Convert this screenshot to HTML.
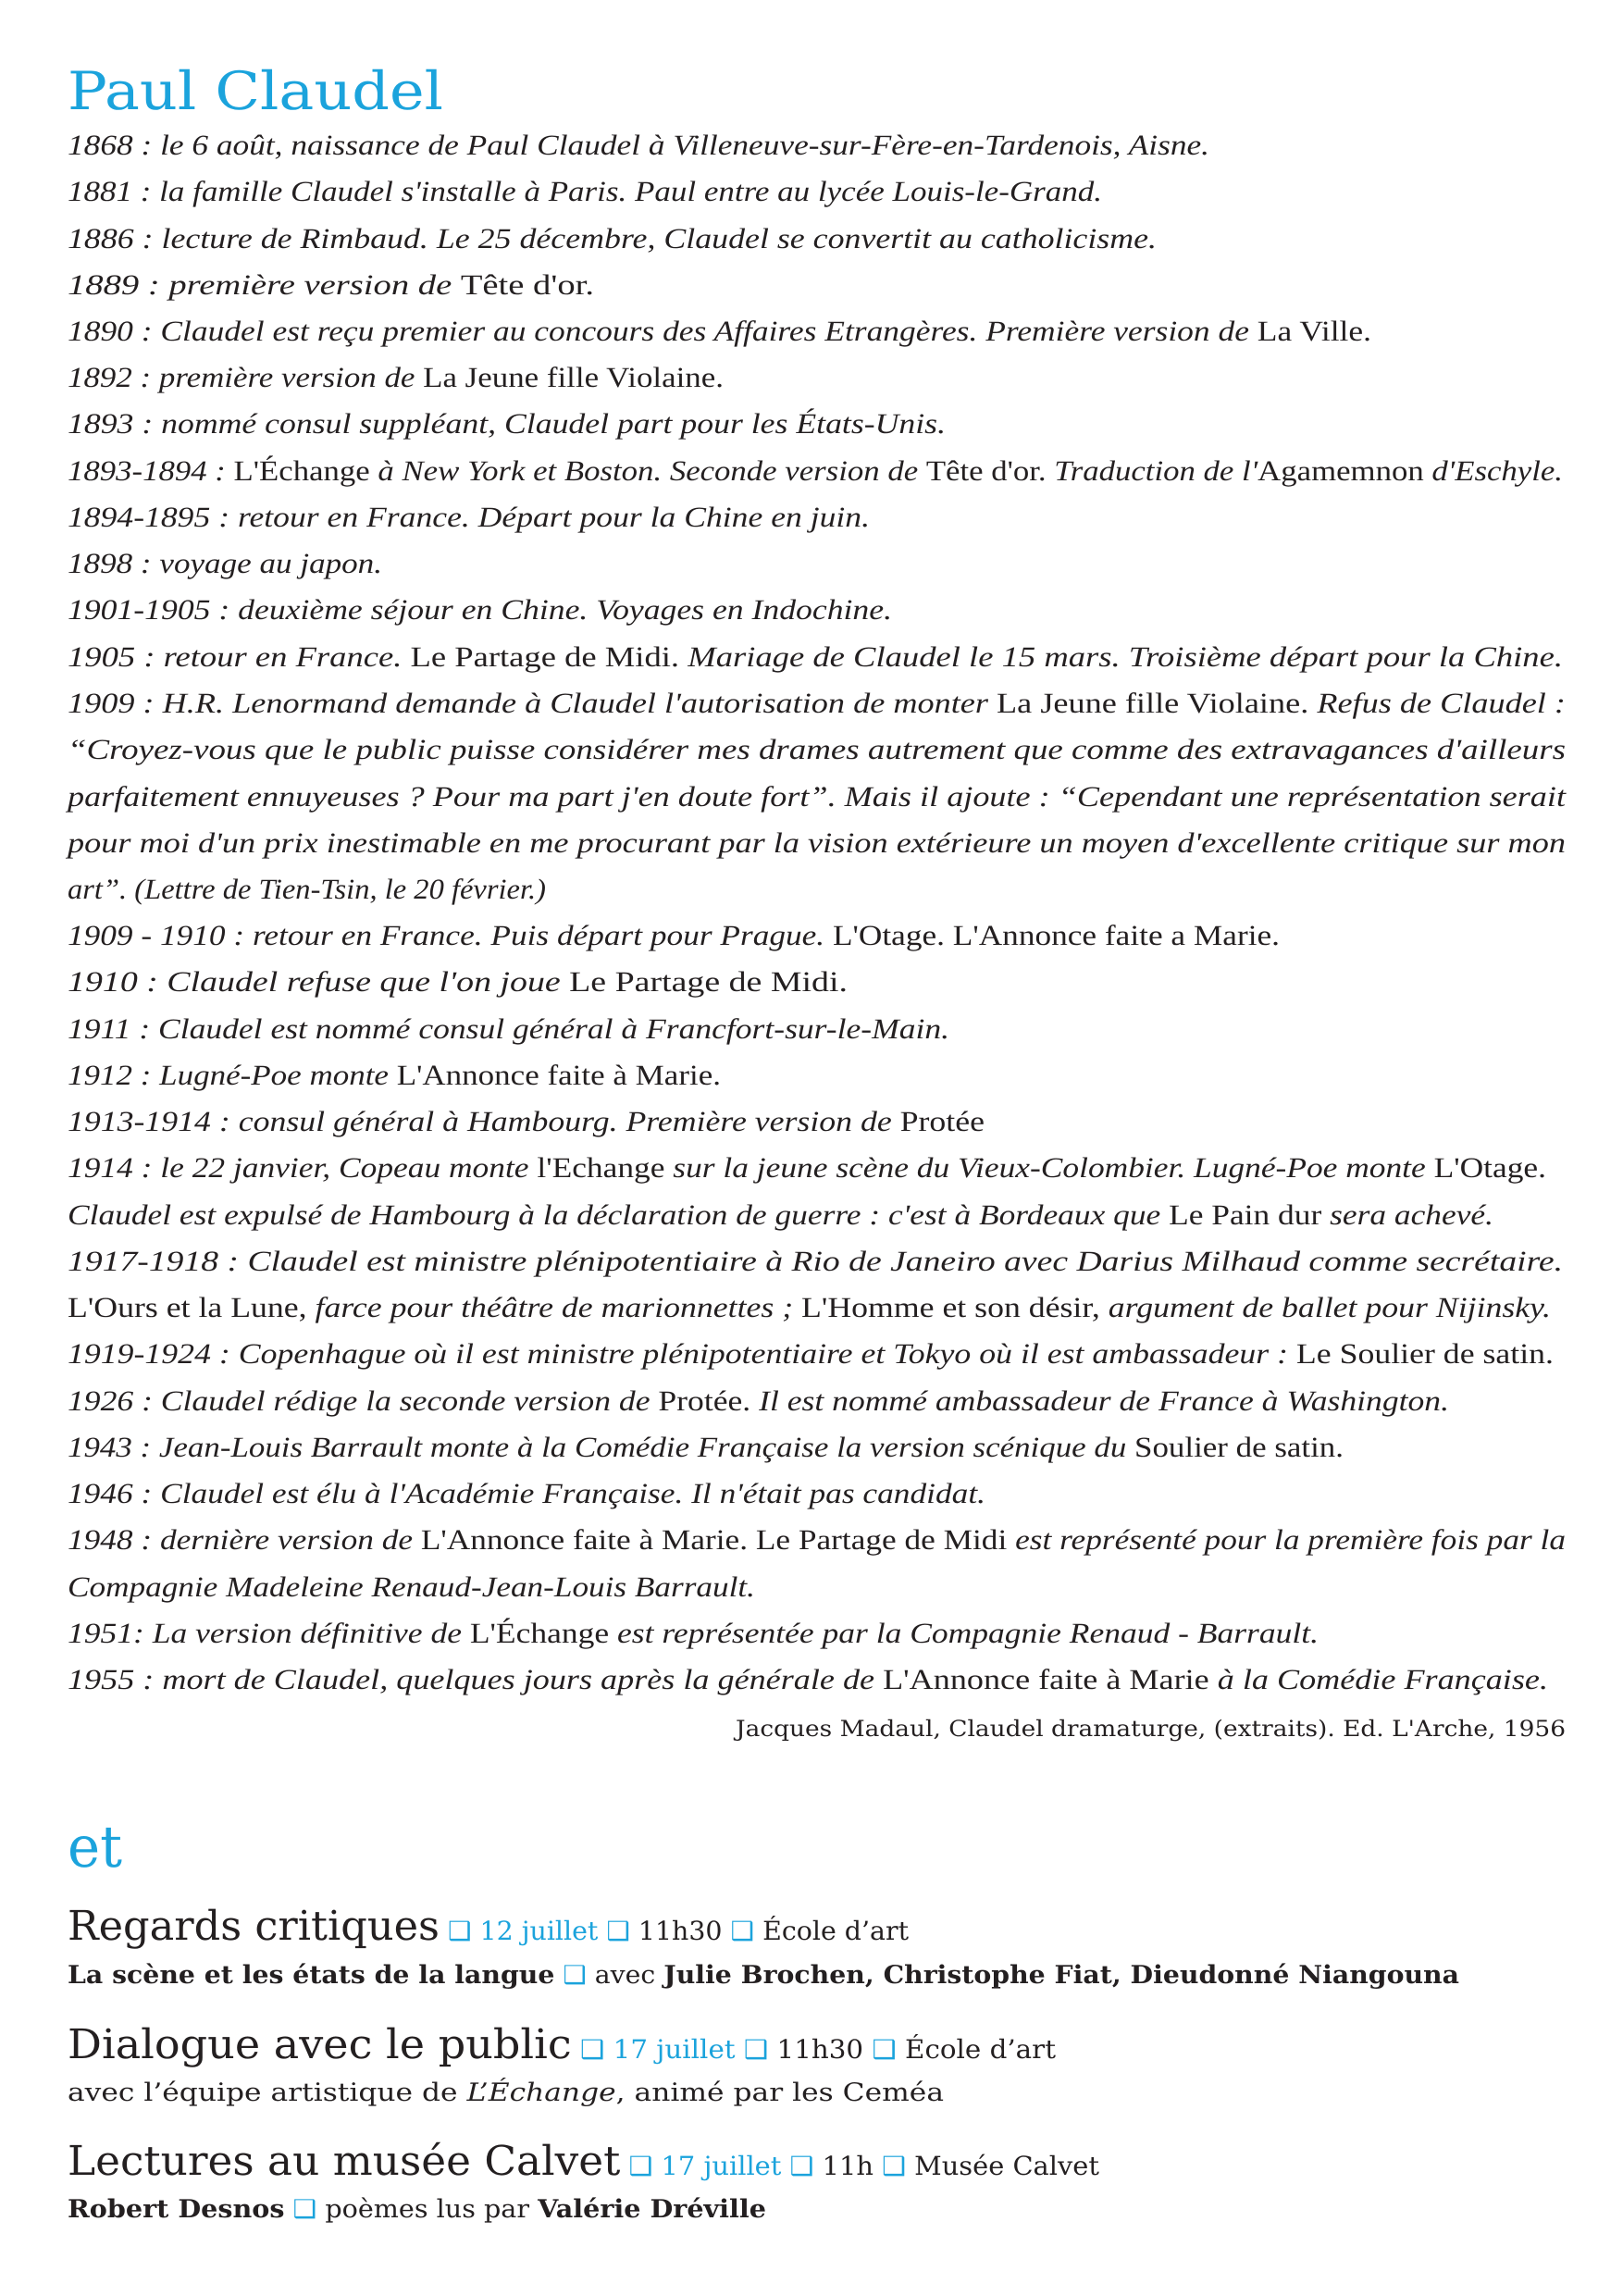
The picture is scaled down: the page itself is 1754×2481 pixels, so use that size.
<!DOCTYPE html>
<html><head><meta charset="utf-8"><style>
html,body{margin:0;padding:0;background:#fff;width:1754px;height:2481px;overflow:hidden}
svg{display:block}
.t{font-family:"Liberation Serif",serif;font-style:italic;font-size:31px;fill:#231f20}
.r{font-style:normal}
.h{font-family:"DejaVu Serif","Liberation Serif",serif;fill:#231f20}
.b{fill:#1ba3dc}
</style></head><body>
<svg width="1754" height="2481" viewBox="0 0 1754 2481" xmlns="http://www.w3.org/2000/svg" text-rendering="geometricPrecision">
<text class="h b" x="73" y="118" font-size="57" textLength="406" lengthAdjust="spacingAndGlyphs">Paul Claudel</text>
<g class="t">
<text x="73" y="167" textLength="1234" lengthAdjust="spacingAndGlyphs">1868 : le 6 août, naissance de Paul Claudel à Villeneuve-sur-Fère-en-Tardenois, Aisne.</text>
<text x="73" y="217" textLength="1118" lengthAdjust="spacingAndGlyphs">1881 : la famille Claudel s'installe à Paris. Paul entre au lycée Louis-le-Grand.</text>
<text x="73" y="268" textLength="1177" lengthAdjust="spacingAndGlyphs">1886 : lecture de Rimbaud. Le 25 décembre, Claudel se convertit au catholicisme.</text>
<text x="73" y="318" textLength="569" lengthAdjust="spacingAndGlyphs">1889 : première version de <tspan class="r">Tête d'or.</tspan></text>
<text x="73" y="368" textLength="1409" lengthAdjust="spacingAndGlyphs">1890 : Claudel est reçu premier au concours des Affaires Etrangères. Première version de <tspan class="r">La Ville.</tspan></text>
<text x="73" y="418" textLength="709" lengthAdjust="spacingAndGlyphs">1892 : première version de <tspan class="r">La Jeune fille Violaine.</tspan></text>
<text x="73" y="468" textLength="949" lengthAdjust="spacingAndGlyphs">1893 : nommé consul suppléant, Claudel part pour les États-Unis.</text>
<text x="73" y="519" textLength="1616" lengthAdjust="spacingAndGlyphs">1893-1894 : <tspan class="r">L'Échange</tspan> à New York et Boston. Seconde version de <tspan class="r">Tête d'or.</tspan> Traduction de l'<tspan class="r">Agamemnon</tspan> d'Eschyle.</text>
<text x="73" y="569" textLength="867" lengthAdjust="spacingAndGlyphs">1894-1895 : retour en France. Départ pour la Chine en juin.</text>
<text x="73" y="619" textLength="340" lengthAdjust="spacingAndGlyphs">1898 : voyage au japon.</text>
<text x="73" y="669" textLength="891" lengthAdjust="spacingAndGlyphs">1901-1905 : deuxième séjour en Chine. Voyages en Indochine.</text>
<text x="73" y="720" textLength="1616" lengthAdjust="spacingAndGlyphs">1905 : retour en France. <tspan class="r">Le Partage de Midi.</tspan> Mariage de Claudel le 15 mars. Troisième départ pour la Chine.</text>
<text x="73" y="770" textLength="1619" lengthAdjust="spacingAndGlyphs">1909 : H.R. Lenormand demande à Claudel l'autorisation de monter <tspan class="r">La Jeune fille Violaine.</tspan> Refus de Claudel :</text>
<text x="73" y="820" textLength="1619" lengthAdjust="spacingAndGlyphs">“Croyez-vous que le public puisse considérer mes drames autrement que comme des extravagances d'ailleurs</text>
<text x="73" y="871" textLength="1619" lengthAdjust="spacingAndGlyphs">parfaitement ennuyeuses ? Pour ma part j'en doute fort”. Mais il ajoute : “Cependant une représentation serait</text>
<text x="73" y="921" textLength="1619" lengthAdjust="spacingAndGlyphs">pour moi d'un prix inestimable en me procurant par la vision extérieure un moyen d'excellente critique sur mon</text>
<text x="73" y="971" textLength="517" lengthAdjust="spacingAndGlyphs">art”. (Lettre de Tien-Tsin, le 20 février.)</text>
<text x="73" y="1021" textLength="1310" lengthAdjust="spacingAndGlyphs">1909 - 1910 : retour en France. Puis départ pour Prague. <tspan class="r">L'Otage. L'Annonce faite a Marie.</tspan></text>
<text x="73" y="1071" textLength="843" lengthAdjust="spacingAndGlyphs">1910 : Claudel refuse que l'on joue <tspan class="r">Le Partage de Midi.</tspan></text>
<text x="73" y="1122" textLength="953" lengthAdjust="spacingAndGlyphs">1911 : Claudel est nommé consul général à Francfort-sur-le-Main.</text>
<text x="73" y="1172" textLength="706" lengthAdjust="spacingAndGlyphs">1912 : Lugné-Poe monte <tspan class="r">L'Annonce faite à Marie.</tspan></text>
<text x="73" y="1222" textLength="991" lengthAdjust="spacingAndGlyphs">1913-1914 : consul général à Hambourg. Première version de <tspan class="r">Protée</tspan></text>
<text x="73" y="1272" textLength="1598" lengthAdjust="spacingAndGlyphs">1914 : le 22 janvier, Copeau monte <tspan class="r">l'Echange</tspan> sur la jeune scène du Vieux-Colombier. Lugné-Poe monte <tspan class="r">L'Otage.</tspan></text>
<text x="73" y="1323" textLength="1541" lengthAdjust="spacingAndGlyphs">Claudel est expulsé de Hambourg à la déclaration de guerre : c'est à Bordeaux que <tspan class="r">Le Pain dur</tspan> sera achevé.</text>
<text x="73" y="1373" textLength="1616" lengthAdjust="spacingAndGlyphs">1917-1918 : Claudel est ministre plénipotentiaire à Rio de Janeiro avec Darius Milhaud comme secrétaire.</text>
<text x="73" y="1423" textLength="1603" lengthAdjust="spacingAndGlyphs"><tspan class="r">L'Ours et la Lune,</tspan> farce pour théâtre de marionnettes ; <tspan class="r">L'Homme et son désir,</tspan> argument de ballet pour Nijinsky.</text>
<text x="73" y="1473" textLength="1606" lengthAdjust="spacingAndGlyphs">1919-1924 : Copenhague où il est ministre plénipotentiaire et Tokyo où il est ambassadeur : <tspan class="r">Le Soulier de satin.</tspan></text>
<text x="73" y="1524" textLength="1493" lengthAdjust="spacingAndGlyphs">1926 : Claudel rédige la seconde version de <tspan class="r">Protée.</tspan> Il est nommé ambassadeur de France à Washington.</text>
<text x="73" y="1574" textLength="1379" lengthAdjust="spacingAndGlyphs">1943 : Jean-Louis Barrault monte à la Comédie Française la version scénique du <tspan class="r">Soulier de satin.</tspan></text>
<text x="73" y="1624" textLength="992" lengthAdjust="spacingAndGlyphs">1946 : Claudel est élu à l'Académie Française. Il n'était pas candidat.</text>
<text x="73" y="1674" textLength="1619" lengthAdjust="spacingAndGlyphs">1948 : dernière version de <tspan class="r">L'Annonce faite à Marie. Le Partage de Midi</tspan> est représenté pour la première fois par la</text>
<text x="73" y="1725" textLength="743" lengthAdjust="spacingAndGlyphs">Compagnie Madeleine Renaud-Jean-Louis Barrault.</text>
<text x="73" y="1775" textLength="1352" lengthAdjust="spacingAndGlyphs">1951: La version définitive de <tspan class="r">L'Échange</tspan> est représentée par la Compagnie Renaud - Barrault.</text>
<text x="73" y="1825" textLength="1600" lengthAdjust="spacingAndGlyphs">1955 : mort de Claudel, quelques jours après la générale de <tspan class="r">L'Annonce faite à Marie</tspan> à la Comédie Française.</text>
</g>
<text class="h" x="795" y="1876" font-size="24" textLength="897" lengthAdjust="spacingAndGlyphs">Jacques Madaul, Claudel dramaturge, (extraits). Ed. L'Arche, 1956</text>
<text class="h b" x="73" y="2017" font-size="62" textLength="59" lengthAdjust="spacingAndGlyphs">et</text>
<text class="h" x="73" y="2096" font-size="28" textLength="909" lengthAdjust="spacingAndGlyphs"><tspan font-size="44">Regards critiques</tspan> <tspan class="b">❑ 12 juillet ❑</tspan> 11h30 <tspan class="b">❑</tspan> École d’art</text>
<text class="h" x="73" y="2143" font-size="27" textLength="1504" lengthAdjust="spacingAndGlyphs"><tspan font-weight="bold">La scène et les états de la langue</tspan> <tspan class="b">❑</tspan> avec <tspan font-weight="bold">Julie Brochen, Christophe Fiat, Dieudonné Niangouna</tspan></text>
<text class="h" x="73" y="2224" font-size="28" textLength="1068" lengthAdjust="spacingAndGlyphs"><tspan font-size="44">Dialogue avec le public</tspan> <tspan class="b">❑ 17 juillet ❑</tspan> 11h30 <tspan class="b">❑</tspan> École d’art</text>
<text class="h" x="73" y="2270" font-size="27" textLength="947" lengthAdjust="spacingAndGlyphs">avec l’équipe artistique de <tspan font-style="italic">L’Échange</tspan>, animé par les Ceméa</text>
<text class="h" x="73" y="2350" font-size="28" textLength="1115" lengthAdjust="spacingAndGlyphs"><tspan font-size="44">Lectures au musée Calvet</tspan> <tspan class="b">❑ 17 juillet ❑</tspan> 11h <tspan class="b">❑</tspan> Musée Calvet</text>
<text class="h" x="73" y="2396" font-size="27" textLength="755" lengthAdjust="spacingAndGlyphs"><tspan font-weight="bold">Robert Desnos</tspan> <tspan class="b">❑</tspan> poèmes lus par <tspan font-weight="bold">Valérie Dréville</tspan></text>
</svg>
</body></html>
